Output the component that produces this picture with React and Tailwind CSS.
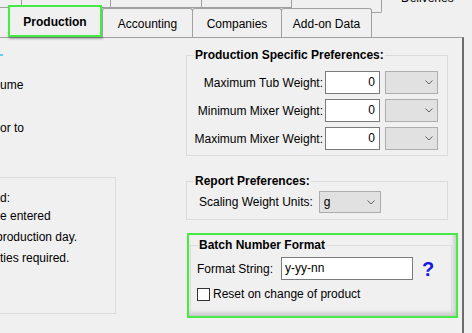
import React from "react";

// chevron used inside the combo boxes
function Chevron() {
  return (
    <svg width="8" height="5" viewBox="0 0 8 5" className="shrink-0">
      <path d="M0.5 0.5 L4 4 L7.5 0.5" fill="none" stroke="#606060" strokeWidth="1" />
    </svg>
  );
}

function Group({ title, className, children }) {
  return (
    <div className={"border border-[#dcdcdc] " + className}>
      <div className="-mt-[8px] ml-[7px] w-fit bg-[#f0f0f0] px-px text-[12px] font-bold leading-[14px]">
        {title}
      </div>
      {children}
    </div>
  );
}

function WeightRow({ label }) {
  return (
    <div className="flex h-[23px] items-center">
      <div className="w-[136px] text-right">{label}</div>
      <div className="ml-[2px] h-[23px] w-[55px] border border-[#7a7a7a] bg-white pr-[4px] text-right leading-[21px]">0</div>
      <div className="ml-[5px] flex h-[23px] w-[53px] items-center justify-end border border-[#adadad] bg-[#e1e1e1] pr-[4px]">
        <Chevron />
      </div>
    </div>
  );
}

export default function App() {
  return (
    <div className="h-[333px] w-[472px] overflow-hidden bg-[#f0f0f0] font-['Liberation_Sans',Arial,sans-serif] text-[12px] leading-[14px] text-black">
      {/* back tab row */}
      <div className="flex h-[8px]">
        <div className="h-[8px] w-[21px] border-b border-[#a0a0a0]" />
        <div className="h-[8px] w-[89px] border-l border-b border-[#a0a0a0]" />
        <div className="h-[8px] w-[91px] border-l border-b border-[#a0a0a0]" />
        <div className="h-[8px] w-[90px] border-l border-b border-[#a0a0a0]" />
        <div className="h-[13px] w-[91px] shrink-0 rounded-b-[2px] border-x border-b border-[#a0a0a0]" />
        <div className="w-[90px] pl-[19px]">
          <div className="-mt-[9px]">Deliveries</div>
        </div>
      </div>

      {/* front tab row */}
      <div className="flex h-[29px] items-end pl-[8px]">
        <div className="-mt-[3px] flex h-[32px] w-[94px] items-center justify-center border-2 border-[#45ea45] bg-[#f0f0f0] pt-[2px] font-bold shadow-[1px_2px_2px_rgba(0,0,0,0.3)]">
          Production
        </div>
        <div className="flex h-[29px] w-[91px] items-center justify-center rounded-t-[3px] border border-b-0 border-[#a0a0a0] bg-[#f0f0f0] pt-[1px]">
          Accounting
        </div>
        <div className="-ml-px flex h-[29px] w-[90px] items-center justify-center rounded-t-[3px] border border-b-0 border-[#a0a0a0] bg-[#f0f0f0] pt-[1px]">
          Companies
        </div>
        <div className="-ml-px flex h-[29px] w-[91px] items-center justify-center rounded-t-[3px] border border-b-0 border-[#a0a0a0] bg-[#f0f0f0] pt-[1px]">
          Add-on Data
        </div>
      </div>

      {/* tab page */}
      <div className="flex h-[296px] w-[464px] border-t border-r-2 border-t-[#a0a0a0] border-r-[#6d6d6d]">
        {/* left column, scrolled partly out of view */}
        <div className="flex w-[186px] shrink-0 flex-col">
          <div className="mt-[16px] h-[2px] w-[3px] bg-[#5ad2f0]" />
          <div className="mt-[22px]">ume</div>
          <div className="mt-[29px]">or to</div>
          <div className="-ml-[2px] mt-[42px] h-[137px] w-[118px] border border-[#dcdcdc] pl-px pt-[13px]">
            <div>d:</div>
            <div className="mt-[4px]">e entered</div>
            <div className="-ml-[4px] mt-[7px]">production day.</div>
            <div className="mt-[7px]">ties required.</div>
          </div>
        </div>

        {/* right column */}
        <div className="flex w-[272px] shrink-0 flex-col">
          <Group title="Production Specific Preferences:" className="mt-[17px] w-[262px] pb-[5px]">
            <div className="mt-[9px] flex flex-col gap-[5px]">
              <WeightRow label="Maximum Tub Weight:" />
              <WeightRow label="Minimum Mixer Weight:" />
              <WeightRow label="Maximum Mixer Weight:" />
            </div>
          </Group>

          <Group title="Report Preferences:" className="mt-[25px] w-[262px] pb-[6px]">
            <div className="mt-[3px] flex h-[22px] items-center pl-[12px]">
              <div>Scaling Weight Units:</div>
              <div className="ml-[6px] flex h-[22px] w-[62px] items-center justify-between border border-[#adadad] bg-[#e1e1e1] pl-[4px] pr-[5px]">
                <span>g</span>
                <Chevron />
              </div>
            </div>
          </Group>

          <div className="ml-px mt-[13px] w-[271px] border-2 border-[#45ea45] pb-[3px] shadow-[inset_-2px_-3px_4px_rgba(0,0,0,0.18)]">
            <Group title="Batch Number Format" className="ml-px mr-[4px] mt-[10px] pb-[11px]">
              <div className="mt-[5px] flex h-[23px] items-center pl-[6px]">
                <div className="w-[84px]">Format String:</div>
                <div className="h-[23px] w-[132px] border border-[#7a7a7a] bg-white pl-[3px] leading-[21px]">y-yy-nn</div>
                <div className="ml-[9px] text-[20px] font-bold leading-[20px] text-[#1717e8]">?</div>
              </div>
              <div className="mt-[7px] flex items-center pl-[6px]">
                <div className="h-[13px] w-[13px] border border-[#333333] bg-white" />
                <div className="ml-[3px]">Reset on change of product</div>
              </div>
            </Group>
          </div>
        </div>
      </div>
    </div>
  );
}
